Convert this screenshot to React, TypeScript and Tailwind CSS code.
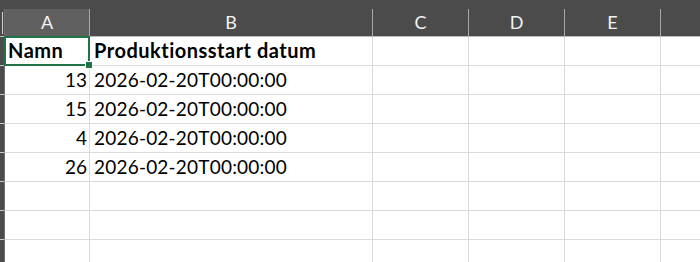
import React from 'react'

const cols = [
    { key: 'A', w: 'w-[85px]' },
    { key: 'B', w: 'w-[283px]' },
    { key: 'C', w: 'w-[96px]' },
    { key: 'D', w: 'w-[96px]' },
    { key: 'E', w: 'w-[96px]' },
]

const rows: [string, string][] = [
    ['13', '2026-02-20T00:00:00'],
    ['15', '2026-02-20T00:00:00'],
    ['4', '2026-02-20T00:00:00'],
    ['26', '2026-02-20T00:00:00'],
    ['', ''],
    ['', ''],
    ['', ''],
    ['', ''],
]

const Cell: React.FC<{ w: string; children?: React.ReactNode; right?: boolean; bold?: boolean }> = ({ w, children, right, bold }) => (
    <div
        className={`${w} shrink-0 h-[29px] border-r border-b border-[#dadada] flex items-end pb-[5px] leading-none whitespace-nowrap ${right ? 'justify-end pr-[2px]' : 'pl-[4px] tracking-[0.2px]'} ${bold ? 'font-bold text-[20px] !tracking-[0.5px]' : ''}`}
    >
        {children}
    </div>
)

const App: React.FC = () => {
    return (
        <div className="w-[700px] h-[262px] overflow-hidden bg-white text-[19px] text-black" style={{ fontFamily: 'Lato, "Liberation Sans", sans-serif' }}>
            {/* top band */}
            <div className="h-[9px] bg-[#4b4b4b]" />

            {/* column headers */}
            <div className="flex h-[28px] bg-[#4b4b4b] border-b border-[#bdbdbd]">
                <div className="w-[5px] shrink-0 border-r border-[#6e6e6e] flex items-center">
                    <div className="ml-[2px] w-[1px] h-[22px] bg-[#d0d0d0]" />
                </div>
                {cols.map((c) => (
                    <div
                        key={c.key}
                        className={`${c.w} shrink-0 flex items-center justify-center border-r border-[#a8a8a8] text-[#f2f2f2] text-[18px] ${c.key === 'A' ? 'bg-[#5f5f5f]' : ''}`}
                    >
                        {c.key}
                    </div>
                ))}
                <div className="flex-1" />
            </div>

            {/* header row */}
            <div className="flex">
                <div className="w-[5px] shrink-0 h-[29px] bg-[#4b4b4b] border-r border-[#6e6e6e] border-b border-b-[#c8c8c8]" />
                <div className="relative w-[85px] shrink-0 h-[29px] border-r border-b border-[#dadada] flex items-end pb-[5px] pl-[3px] leading-none font-bold text-[20px] tracking-[0.5px]">
                    Namn
                    <div className="absolute -left-px -top-px w-[86px] h-[30px] border-2 border-[#217346]" />
                    <div className="absolute right-[-4px] bottom-[-4px] w-[6px] h-[6px] bg-[#217346] border border-white box-content" />
                </div>
                <Cell w="w-[283px]" bold>
                    Produktionsstart datum
                </Cell>
                <Cell w="w-[96px]" />
                <Cell w="w-[96px]" />
                <Cell w="w-[96px]" />
                <div className="flex-1 h-[29px] border-b border-[#dadada]" />
            </div>

            {rows.map((r, i) => (
                <div key={i} className="flex">
                    <div className="w-[5px] shrink-0 h-[29px] bg-[#4b4b4b] border-r border-[#6e6e6e] border-b border-b-[#c8c8c8]" />
                    <Cell w="w-[85px]" right>
                        {r[0]}
                    </Cell>
                    <Cell w="w-[283px]">{r[1]}</Cell>
                    <Cell w="w-[96px]" />
                    <Cell w="w-[96px]" />
                    <Cell w="w-[96px]" />
                    <div className="flex-1 h-[29px] border-b border-[#dadada]" />
                </div>
            ))}
        </div>
    )
}

export default App
